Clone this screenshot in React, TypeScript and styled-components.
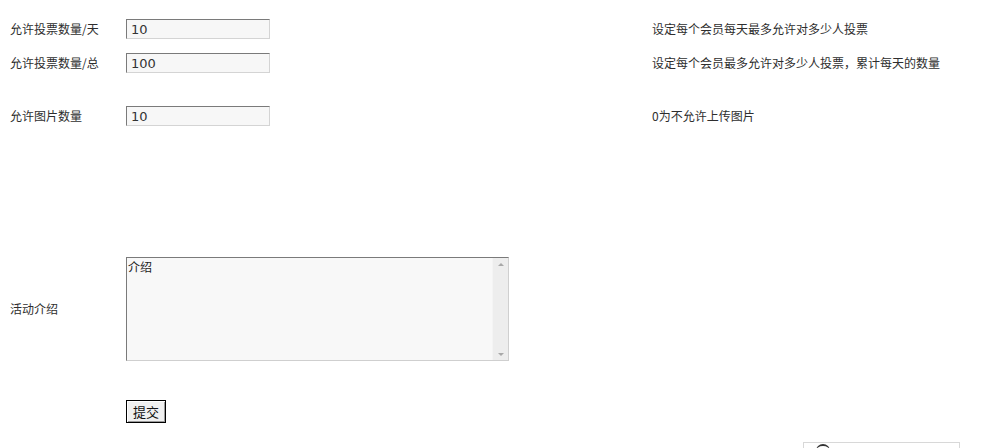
import React from "react";
import styled, { createGlobalStyle } from "styled-components";

const GlobalStyle = createGlobalStyle`
  html, body {
    margin: 0;
    padding: 0;
    background: #fff;
    overflow: hidden;
  }
  body {
    font-family: "Noto Sans CJK SC", "DejaVu Sans", sans-serif;
    font-size: 12px;
    color: #333;
  }
`;

const Page = styled.div`
  width: 1004px;
  height: 448px;
  padding: 12px 0 0 10px;
  box-sizing: border-box;
  overflow: hidden;
`;

const Row = styled.div<{ $height: number; $gap?: number }>`
  display: grid;
  grid-template-columns: 116px 526px 1fr;
  align-items: center;
  height: ${(p) => p.$height}px;
  margin-top: ${(p) => p.$gap ?? 0}px;
`;

const Label = styled.div`
  font-size: 12px;
  line-height: 14px;
  color: #2e2e2e;
  white-space: nowrap;
`;

const Hint = styled.div`
  font-size: 12px;
  line-height: 14px;
  color: #2e2e2e;
  white-space: nowrap;
`;

const TextInput = styled.input`
  width: 144px;
  height: 20px;
  box-sizing: border-box;
  padding: 0 4px;
  margin: 0;
  border-style: solid;
  border-width: 1px;
  border-color: #7a7a7a #d4d4d4 #d4d4d4 #7a7a7a;
  background: #f7f7f7;
  font-family: "DejaVu Sans", Verdana, sans-serif;
  font-size: 13px;
  color: #333;
  outline: none;
`;

const AreaBox = styled.div`
  display: flex;
  width: 383px;
  height: 104px;
  box-sizing: border-box;
  border-style: solid;
  border-width: 1px;
  border-color: #7a7a7a #cfcfcf #cfcfcf #7a7a7a;
  background: #f8f8f8;
`;

const Area = styled.textarea`
  flex: 1;
  margin: 0;
  padding: 2px 1px;
  border: none;
  resize: none;
  background: transparent;
  font-family: "Noto Sans CJK SC", sans-serif;
  font-size: 12px;
  line-height: 14px;
  color: #222;
  outline: none;
  overflow: hidden;
`;

const ScrollTrack = styled.div`
  width: 16px;
  display: flex;
  flex-direction: column;
  justify-content: space-between;
  align-items: center;
  background: #ededed;
  border-left: 1px solid #f4f4f4;
  padding: 5px 0 4px;
  box-sizing: border-box;
`;

const Arrow = styled.div<{ $down?: boolean }>`
  width: 0;
  height: 0;
  border-left: 3px solid transparent;
  border-right: 3px solid transparent;
  ${(p) =>
    p.$down
      ? "border-top: 3px solid #a8a8a8;"
      : "border-bottom: 3px solid #a8a8a8;"}
`;

const SubmitButton = styled.button`
  width: 40px;
  height: 23px;
  box-sizing: border-box;
  padding: 0;
  margin: 0;
  border: 1px solid #000;
  box-shadow: inset 1px 1px 0 #fff, inset -1px -1px 0 #9a9a9a;
  background: #f0f0f0;
  font-family: "Noto Sans CJK SC", sans-serif;
  font-size: 13px;
  line-height: 15px;
  color: #111;
`;

const Widget = styled.div`
  margin-left: 151px;
  width: 157px;
  height: 20px;
  box-sizing: border-box;
  border: 1px solid #d8d8d8;
  border-bottom: none;
  padding: 1px 0 0 12px;
`;

const WidgetDot = styled.div`
  width: 14px;
  height: 14px;
  border-radius: 50%;
  border-top: 2px solid #333;
  box-sizing: border-box;
`;

const settings = [
  { label: "允许投票数量/天", value: "10", hint: "设定每个会员每天最多允许对多少人投票", gap: 0 },
  { label: "允许投票数量/总", value: "100", hint: "设定每个会员最多允许对多少人投票，累计每天的数量", gap: 0 },
  { label: "允许图片数量", value: "10", hint: "0为不允许上传图片", gap: 19 },
];

export default function App() {
  return (
    <Page>
      <GlobalStyle />
      {settings.map((s) => (
        <Row key={s.label} $height={34} $gap={s.gap}>
          <Label>{s.label}</Label>
          <div>
            <TextInput defaultValue={s.value} />
          </div>
          <Hint>{s.hint}</Hint>
        </Row>
      ))}
      <Row $height={104} $gap={124}>
        <Label>活动介绍</Label>
        <AreaBox>
          <Area defaultValue="介绍" />
          <ScrollTrack>
            <Arrow />
            <Arrow $down />
          </ScrollTrack>
        </AreaBox>
        <div />
      </Row>
      <Row $height={23} $gap={39}>
        <div />
        <div>
          <SubmitButton>提交</SubmitButton>
        </div>
        <div />
      </Row>
      <Row $height={20} $gap={19}>
        <div />
        <div />
        <Widget>
          <WidgetDot />
        </Widget>
      </Row>
    </Page>
  );
}
